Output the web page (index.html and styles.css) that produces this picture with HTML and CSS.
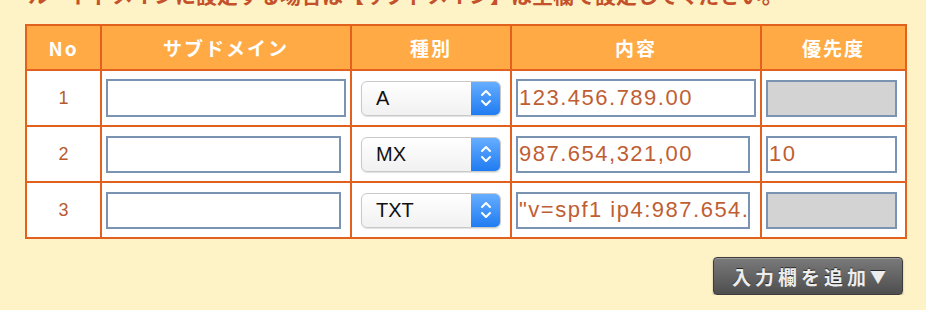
FILE: index.html
```html
<!DOCTYPE html>
<html lang="ja">
<head>
    <meta charset="UTF-8">
    <title>サブドメイン設定</title>
    <link rel="stylesheet" href="styles.css">
</head>
<body>
    <div class="page">
        <p class="note">ルートドメインに設定する場合は【サブドメイン】は空欄で設定してください。</p>

        <table class="records">
            <colgroup>
                <col class="col-no">
                <col class="col-sub">
                <col class="col-type">
                <col class="col-value">
                <col class="col-prio">
            </colgroup>
            <thead>
                <tr>
                    <th>No</th>
                    <th>サブドメイン</th>
                    <th>種別</th>
                    <th>内容</th>
                    <th>優先度</th>
                </tr>
            </thead>
            <tbody>
                <tr>
                    <td class="num">1</td>
                    <td><input class="field sub wide" type="text"></td>
                    <td>
                        <div class="select">
                            <span class="select-text">A</span>
                            <span class="stepper">
                                <svg width="14" height="24" viewBox="0 0 14 24"><path d="M3 9 L7 5 L11 9 M3 15 L7 19 L11 15" fill="none" stroke="#fff" stroke-width="2" stroke-linecap="round" stroke-linejoin="round"/></svg>
                            </span>
                        </div>
                    </td>
                    <td><input class="field value wide" type="text" value="123.456.789.00"></td>
                    <td><input class="field prio disabled" type="text" disabled></td>
                </tr>
                <tr>
                    <td class="num">2</td>
                    <td><input class="field sub" type="text"></td>
                    <td>
                        <div class="select">
                            <span class="select-text">MX</span>
                            <span class="stepper">
                                <svg width="14" height="24" viewBox="0 0 14 24"><path d="M3 9 L7 5 L11 9 M3 15 L7 19 L11 15" fill="none" stroke="#fff" stroke-width="2" stroke-linecap="round" stroke-linejoin="round"/></svg>
                            </span>
                        </div>
                    </td>
                    <td><input class="field value" type="text" value="987.654,321,00"></td>
                    <td><input class="field prio" type="text" value="10"></td>
                </tr>
                <tr>
                    <td class="num">3</td>
                    <td><input class="field sub" type="text"></td>
                    <td>
                        <div class="select">
                            <span class="select-text">TXT</span>
                            <span class="stepper">
                                <svg width="14" height="24" viewBox="0 0 14 24"><path d="M3 9 L7 5 L11 9 M3 15 L7 19 L11 15" fill="none" stroke="#fff" stroke-width="2" stroke-linecap="round" stroke-linejoin="round"/></svg>
                            </span>
                        </div>
                    </td>
                    <td><input class="field value" type="text" value="&quot;v=spf1 ip4:987.654.321.00 ~all&quot;"></td>
                    <td><input class="field prio disabled" type="text" disabled></td>
                </tr>
            </tbody>
        </table>

        <div class="actions">
            <button class="add-btn">入力欄を追加<span class="arrow">▼</span></button>
        </div>
    </div>
</body>
</html>
```

FILE: styles.css
```css
* {
    margin: 0;
    padding: 0;
    box-sizing: border-box;
}

body {
    background: #fdf3c6;
    font-family: "Liberation Sans", "Noto Sans CJK JP", sans-serif;
    overflow: hidden;
}

.page {
    padding: 0 21px 0 25px;
}

/* only the lower part of this line is in view */
.note {
    font-family: "Noto Sans CJK JP", sans-serif;
    font-weight: bold;
    font-size: 21px;
    line-height: 24px;
    color: #c4512a;
    margin-top: -18px;
    padding-left: 3px;
    white-space: nowrap;
}

.records {
    width: 880px;
    margin-top: 18px;
    border-collapse: collapse;
    table-layout: fixed;
    background: #fff;
}

.col-no { width: 75px; }
.col-sub { width: 250px; }
.col-type { width: 160px; }
.col-value { width: 250px; }
.col-prio { width: 145px; }

.records th,
.records td {
    border: 2px solid #e2611e;
}

.records th {
    height: 45px;
    background: #ffaa45;
    color: #fff;
    font-family: "Noto Sans CJK JP", sans-serif;
    font-weight: bold;
    font-size: 19px;
    letter-spacing: 2px;
    text-align: center;
}

.records td {
    height: 56px;
    padding: 0 4px;
    vertical-align: middle;
}

.records td.num {
    text-align: center;
    font-size: 18px;
    color: #b85a2e;
}

.field {
    display: block;
    height: 37px;
    border: 2px solid #7b93b2;
    background: #fff;
    font-family: "Liberation Sans", sans-serif;
    font-size: 22px;
    letter-spacing: 1.5px;
    color: #c05e33;
    padding: 0 1px;
    outline: none;
}

.field.sub { width: 235px; }
.field.value { width: 234px; }
.field.prio { width: 131px; }
.field.wide { width: 240px; height: 38px; }
.field.disabled { background: #d3d3d3; }

.select {
    display: flex;
    align-items: center;
    width: 140px;
    height: 35px;
    margin-left: 5px;
    border: 1px solid #c9c9c9;
    border-radius: 6px;
    background: linear-gradient(#ffffff, #f1f1f1);
    box-shadow: 0 1px 1px rgba(0, 0, 0, 0.12);
    overflow: hidden;
}

.select-text {
    flex: 1;
    padding-left: 14px;
    font-size: 20px;
    color: #111;
}

.stepper {
    display: flex;
    align-items: center;
    justify-content: center;
    width: 29px;
    height: 100%;
    background: linear-gradient(#66adff, #1f7cf2);
}

.actions {
    display: flex;
    justify-content: flex-end;
    margin-top: 18px;
    padding-right: 2px;
}

.add-btn {
    height: 38px;
    width: 190px;
    padding: 0 4px 0 6px;
    background: linear-gradient(#7a7a7a, #4e4e4e);
    border: 1px solid #3c3c3c;
    border-radius: 4px;
    box-shadow: inset 0 1px 0 rgba(255, 255, 255, 0.25), 0 1px 2px rgba(0, 0, 0, 0.3);
    color: #ededed;
    font-family: "Noto Sans CJK JP", sans-serif;
    font-weight: bold;
    font-size: 19px;
    letter-spacing: 4px;
    text-shadow: 0 -1px 0 #2a2a2a;
    display: flex;
    align-items: center;
    justify-content: center;
    white-space: nowrap;
}

.add-btn .arrow {
    font-size: 16px;
    letter-spacing: 0;
}
```
